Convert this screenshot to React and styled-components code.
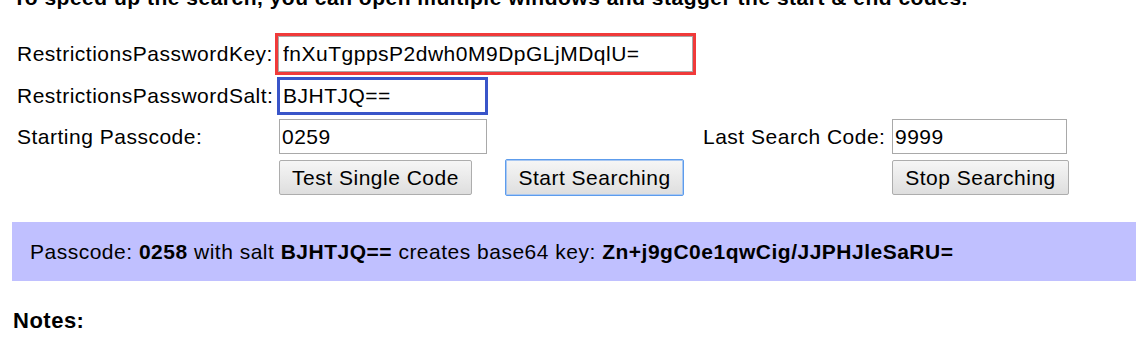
import React from 'react'
import styled, { createGlobalStyle } from 'styled-components'

const GlobalStyle = createGlobalStyle`
  html, body {
    margin: 0;
    padding: 0;
    background: #fff;
    overflow: hidden;
  }
  body {
    font-family: "Liberation Sans", Arial, sans-serif;
    font-size: 21px;
    letter-spacing: 0.5px;
    color: #000;
  }
`;

const Page = styled.div`
  padding-left: 12px;
  margin-top: -14px;
`;

const Intro = styled.p`
  margin: 0 0 0 1px;
  font-weight: 700;
  line-height: 24px;
  white-space: nowrap;
`;

const Row = styled.div`
  display: grid;
  grid-template-columns: 267px 226px 198px 189px auto;
  align-items: center;
  margin-top: ${props => props.$mt || 0}px;
`;

const Label = styled.span`
  padding-left: ${props => (props.$inner ? 0 : 5)}px;
  white-space: nowrap;
`;

const Field = styled.input`
  box-sizing: border-box;
  font: inherit;
  letter-spacing: inherit;
  color: #000;
  width: ${props => props.$w}px;
  height: ${props => props.$h || 35}px;
  margin: 0 0 0 ${props => props.$ml || 0}px;
  padding: 0 2px;
  border: 1px solid #a9a9a9;
  background: #fff;
  outline: none;
`;

const KeyField = styled(Field)`
  grid-column: 2 / -1;
  justify-self: start;
  margin-top: 3px;
  margin-bottom: 3px;
  padding-left: 4px;
  outline: 3px solid #f03a3a;
`;

const SaltField = styled(Field)`
  grid-column: 2 / -1;
  justify-self: start;
  padding-left: 3px;
  border: 3px solid #3955c9;
`;

const Button = styled.button`
  box-sizing: border-box;
  font: inherit;
  letter-spacing: inherit;
  color: #000;
  width: ${props => props.$w}px;
  height: ${props => (props.$focus ? 37 : 35)}px;
  padding: 0;
  border: 1px solid ${props => (props.$focus ? '#5d9cec' : '#adadad')};
  box-shadow: ${props => (props.$focus ? 'inset 0 0 0 1px #a9c8f2' : 'none')};
  border-radius: 2px;
  background: linear-gradient(#f6f6f6, #dedede);
  text-align: center;
`;

const Result = styled.div`
  margin-top: 26px;
  height: 59px;
  display: flex;
  align-items: center;
  padding-left: 18px;
  background: #c0c0ff;
  white-space: nowrap;
`;

const Notes = styled.h4`
  margin: 27px 0 0 1px;
  font-size: 22px;
  line-height: 25px;
  font-weight: 700;
`;

const App = () => {
  return (
    <>
      <GlobalStyle />
      <Page>
        <Intro>To speed up the search, you can open multiple windows and stagger the start &amp; end codes.</Intro>

        <Row $mt={23}>
          <Label>RestrictionsPasswordKey:</Label>
          <KeyField $w={415} $h={36} $ml={-1} defaultValue="fnXuTgppsP2dwh0M9DpGLjMDqlU=" />
        </Row>

        <Row $mt={2}>
          <Label>RestrictionsPasswordSalt:</Label>
          <SaltField $w={211} $h={38} $ml={-2} defaultValue="BJHTJQ==" />
        </Row>

        <Row $mt={4}>
          <Label>Starting Passcode:</Label>
          <Field $w={208} defaultValue="0259" />
          <span />
          <Label $inner>Last Search Code:</Label>
          <Field $w={175} defaultValue="9999" />
        </Row>

        <Row $mt={5}>
          <span />
          <Button $w={193}>Test Single Code</Button>
          <Button $w={179} $focus>Start Searching</Button>
          <span />
          <Button $w={177}>Stop Searching</Button>
        </Row>

        <Result>
          <span>
            Passcode: <b>0258</b> with salt <b>BJHTJQ==</b> creates base64 key: <b>Zn+j9gC0e1qwCig/JJPHJleSaRU=</b>
          </span>
        </Result>

        <Notes>Notes:</Notes>
      </Page>
    </>
  )
}

export default App
